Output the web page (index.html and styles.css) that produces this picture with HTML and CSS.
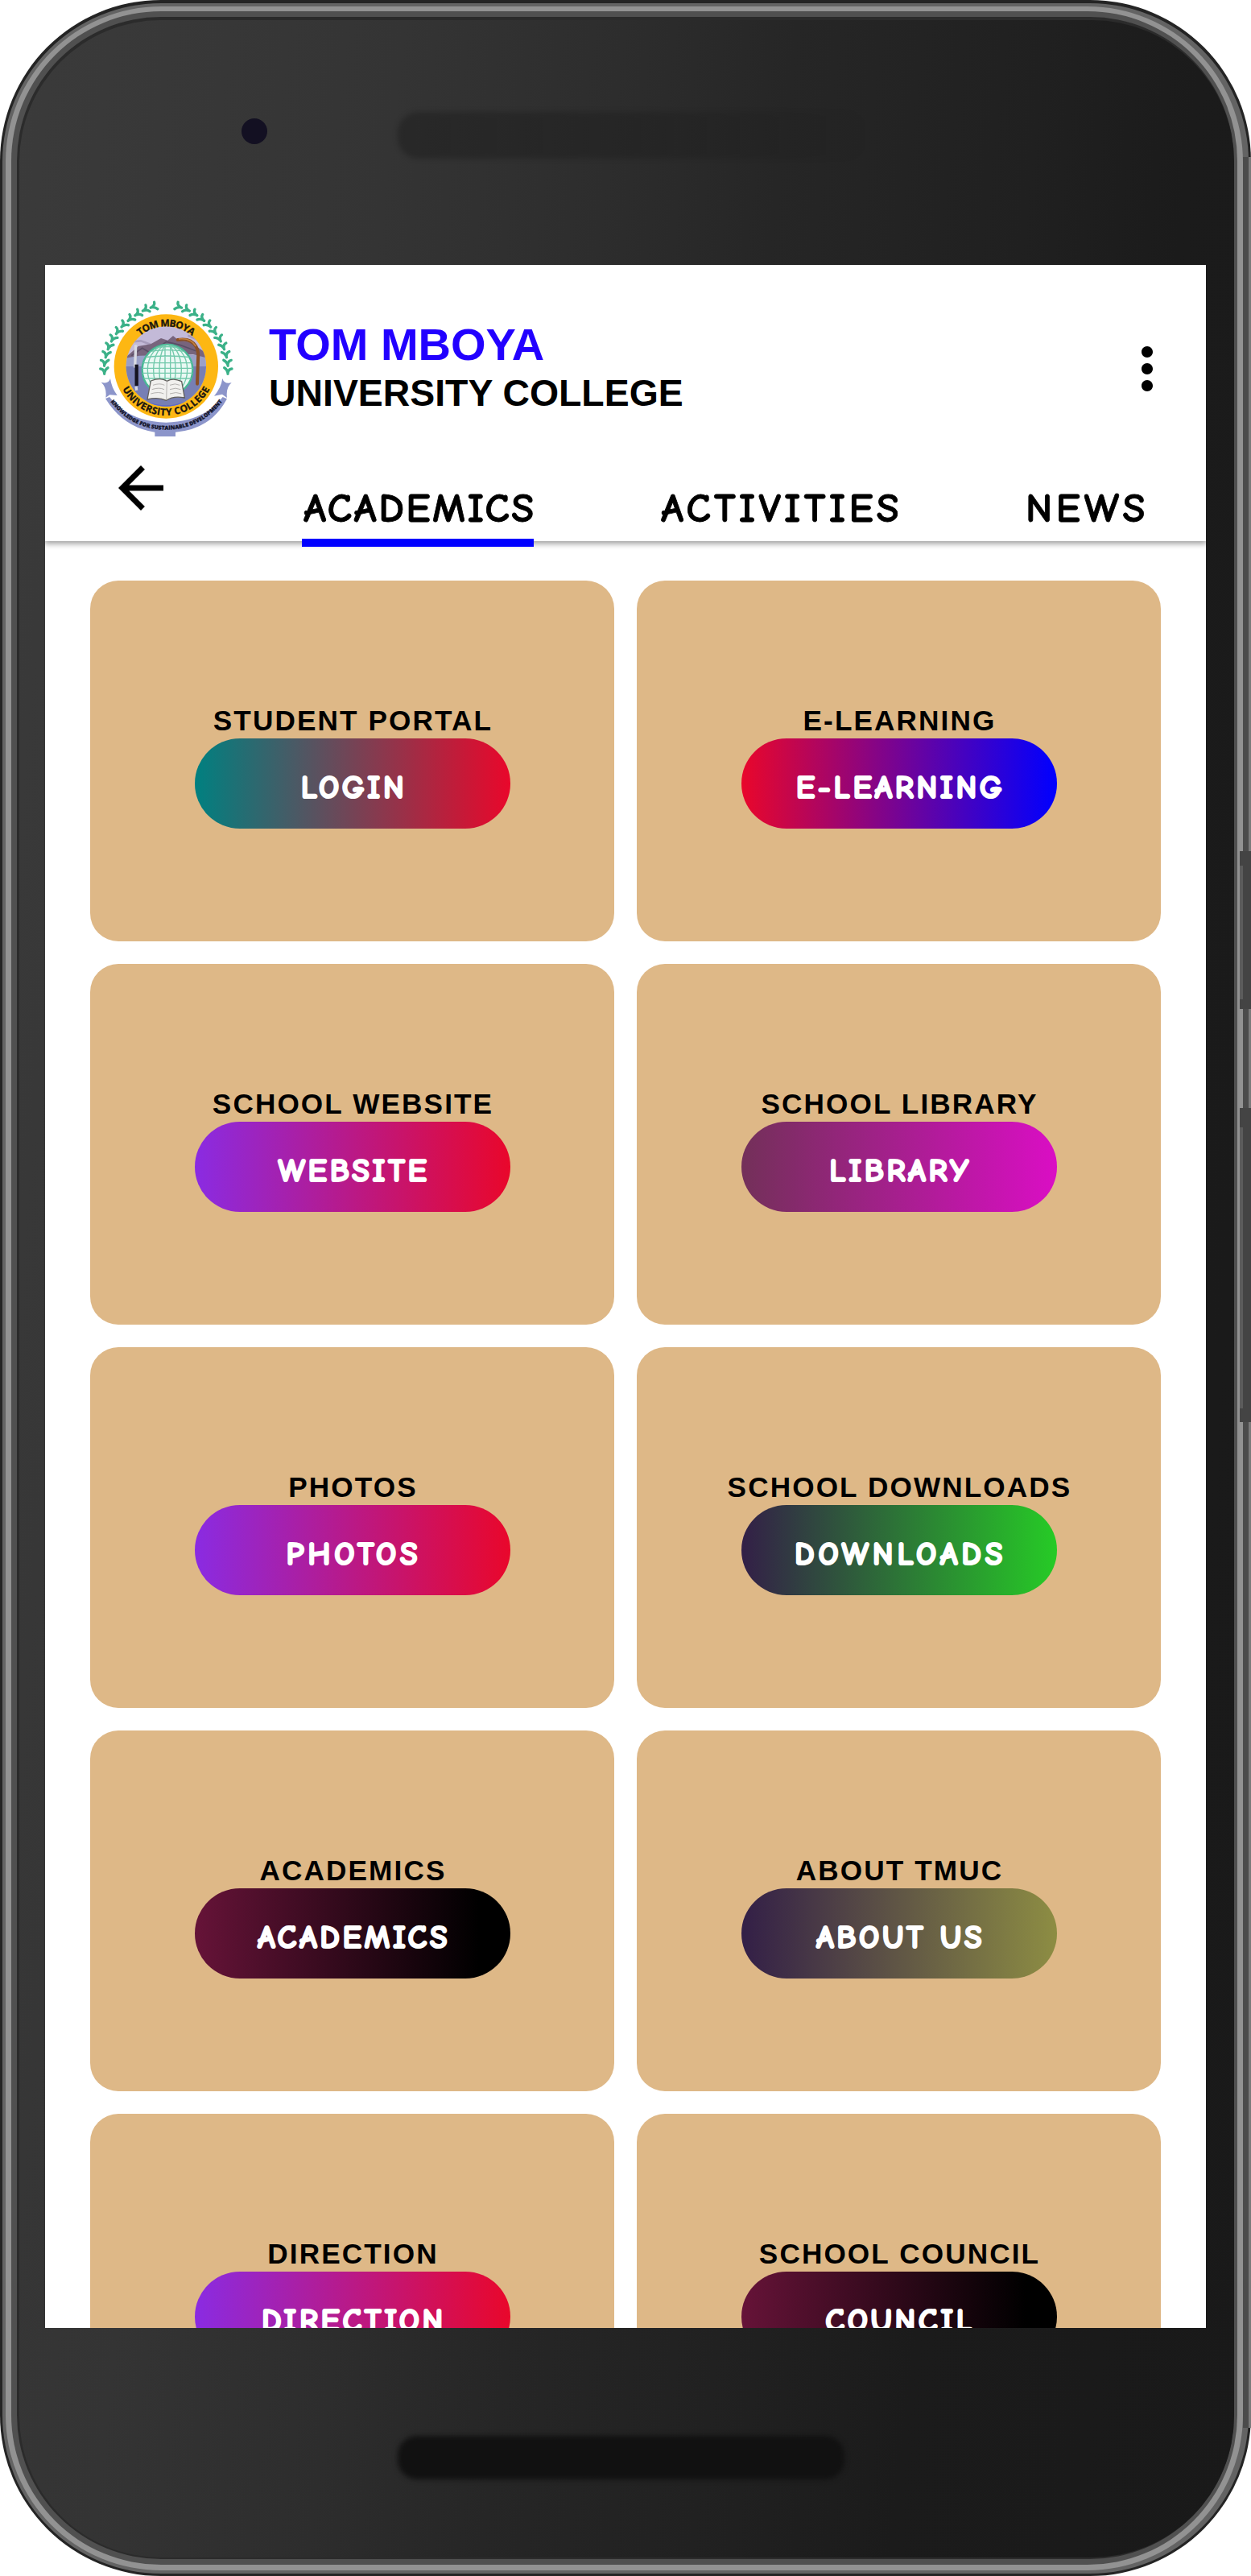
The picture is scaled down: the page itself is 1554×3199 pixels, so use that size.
FILE: index.html
```html
<!DOCTYPE html>
<html lang="en">
<head>
<meta charset="utf-8">
<title>Tom Mboya University College</title>
<link rel="stylesheet" href="styles.css">
</head>
<body>
<div class="phone">
  <svg class="frame" width="1554" height="3199" viewBox="0 0 1554 3199" aria-hidden="true">
    <defs>
      <linearGradient id="body" gradientUnits="userSpaceOnUse" x1="0" y1="0" x2="1920" y2="240">
        <stop offset="0" stop-color="#3b3b3b"/>
        <stop offset=".26" stop-color="#343434"/>
        <stop offset=".4" stop-color="#2d2d2d"/>
        <stop offset=".51" stop-color="#262626"/>
        <stop offset=".67" stop-color="#202020"/>
        <stop offset=".77" stop-color="#1b1b1b"/>
        <stop offset="1" stop-color="#191919"/>
      </linearGradient>
      <linearGradient id="grille" x1="0" x2="1" y1="0" y2="0">
        <stop offset="0" stop-color="#000" stop-opacity=".22"/>
        <stop offset=".5" stop-color="#000" stop-opacity=".14"/>
        <stop offset="1" stop-color="#000" stop-opacity="0"/>
      </linearGradient>
      <filter id="soft" x="-5%" y="-20%" width="110%" height="140%" color-interpolation-filters="sRGB"><feGaussianBlur stdDeviation="3"/></filter>
    </defs>
    <rect width="1554" height="3199" rx="200" fill="#242424"/>
    <rect x="3" y="4" width="1548" height="3192" rx="197" fill="#636363"/>
    <rect x="7" y="8" width="1537" height="3184" rx="193" fill="#929292"/>
    <rect x="14" y="14" width="1523" height="3171" rx="186" fill="#505050"/>
    <rect x="21" y="21" width="1512" height="3157" rx="179" fill="#2b2b2b"/>
    <rect x="24" y="25" width="1509" height="3151" rx="176" fill="url(#body)"/>
    <rect x="1544" y="195" width="7" height="2820" fill="#4b4b4b"/>
    <rect x="1551" y="195" width="3" height="2820" fill="#7a7a7a"/>
    <path d="M1540 1057h14v196h-14zM1540 1376h14v390h-14z" fill="#444"/>
    <path d="M1540 1075h4v166h-4zM1540 1400h4v349h-4z" fill="#5c5c5c"/>
    <ellipse cx="316" cy="163" rx="16" ry="16" fill="#131022"/>
    <rect x="494" y="139" width="585" height="58" rx="26" fill="url(#grille)" filter="url(#soft)"/>
    <rect x="494" y="3025" width="555" height="54" rx="24" fill="#111" filter="url(#soft)"/>
  </svg>

  <div class="screen">
    <header class="header">
      <div class="brand">
        <svg class="crest" viewBox="60 60 525 525" role="img" aria-label="Crest">
          <defs>
            <path id="arc-top" d="M170 315a149 149 0 0 1 298 0"/>
            <path id="arc-bottom" d="M136 315a183 183 0 0 0 366 0"/>
            <path id="arc-motto" d="M101 430Q180 550 319 551Q458 550 540 430"/>
            <clipPath id="disc"><circle cx="319" cy="315" r="149"/></clipPath>
            <clipPath id="globe"><circle cx="324" cy="328" r="94"/></clipPath>
            <g id="leaf"><path d="M-15-9Q-4-9 0 6Q3-8 13-13M0 4v6" fill="none" stroke="#3bb188" stroke-width="10" stroke-linecap="round"/></g>
            <g id="branch">
              <use href="#leaf" transform="translate(89 333)"/>
              <use href="#leaf" transform="translate(90 303) rotate(8)"/>
              <use href="#leaf" transform="translate(96 272) rotate(14)"/>
              <use href="#leaf" transform="translate(106 242) rotate(22)"/>
              <use href="#leaf" transform="translate(120 213) rotate(30)"/>
              <use href="#leaf" transform="translate(139 186) rotate(38)"/>
              <use href="#leaf" transform="translate(160 161) rotate(45)"/>
              <use href="#leaf" transform="translate(185 139) rotate(52)"/>
              <use href="#leaf" transform="translate(212 120) rotate(59)"/>
              <use href="#leaf" transform="translate(241 104) rotate(65)"/>
              <use href="#leaf" transform="translate(271 93) rotate(71)"/>
            </g>
          </defs>
          <use href="#branch"/>
          <use href="#branch" transform="matrix(-1 0 0 1 638 0)"/>
          <circle cx="319" cy="315" r="194" fill="#fdb713"/>
          <g clip-path="url(#disc)">
            <rect x="165" y="160" width="310" height="310" fill="#c3bad8"/>
            <rect x="165" y="272" width="310" height="50" fill="#9aa0c8"/>
            <rect x="165" y="315" width="310" height="155" fill="#777fb4"/>
            <path d="M165 225l60-5 40 15M400 200l75 30" stroke="#a79cbc" stroke-width="8" fill="none"/>
            <path d="M165 285L215 240L262 232L300 210L325 218L345 201L362 215L410 225L475 270V285L420 270L220 275Z" fill="#77647d"/>
            <path d="M190 275l40-28 30 18 60-42 50 12 60 22" stroke="#5a4d66" stroke-width="5" fill="none"/>
            <path d="M170 400q149 120 298 0v80H170z" fill="#5b68c6"/>
          </g>
          <circle cx="324" cy="328" r="94" fill="#eaf9f4" stroke="#48b895" stroke-width="7"/>
          <g clip-path="url(#globe)" fill="none" stroke="#72c9ab" stroke-width="4">
            <ellipse cx="324" cy="328" rx="74" ry="94"/><ellipse cx="324" cy="328" rx="52" ry="94"/><ellipse cx="324" cy="328" rx="30" ry="94"/><path d="M315 230v190M335 230v190M226 340h196M226 322h196M226 302h196M230 282q94-12 188 0M240 262q84-16 168 0M230 360h190M260 248q64-12 128 0"/>
          </g>
          <path d="M206 235l-3 85M207 390l2 14" stroke="#d9dbe3" stroke-width="10" fill="none"/>
          <path d="M209 308V387" stroke="#151420" stroke-width="13"/>
          <path d="M362 216Q410 208 430 240Q441 258 438 290L435 380" fill="none" stroke="#8a4f25" stroke-width="12" stroke-linecap="round"/>
          <path d="M366 213Q412 208 430 240" fill="none" stroke="#c3813e" stroke-width="5"/>
          <path d="M262 369Q300 354 322 370Q345 356 377 371L388 432Q345 424 320 442Q290 428 249 438Z" fill="#f1f0ee" stroke="#625f5c" stroke-width="4"/>
          <path d="M322 370L320 440M270 385q25-9 43 0M266 401q28-9 46 0M262 417q30-9 48 0M333 385q20-9 37 0M333 401q22-9 40 0M333 417q24-9 43 0" fill="none" stroke="#b5b3b1" stroke-width="3"/>
          <path d="M77 374Q105 382 111 360Q115 393 137 423L109 421L94 431Q99 394 77 374ZM563 376Q535 382 529 360Q524 395 498 425L528 419L546 432Q541 394 563 376Z" fill="#8c95ca"/>
          <path d="M108 429Q180 521 319 524Q458 521 530 429L546 436Q485 550 354 560V576H277V560Q160 543 93 435Z" fill="#8c95ca"/>
          <text class="crest-name"><textPath href="#arc-top" startOffset="50%" text-anchor="middle" textLength="210">TOM MBOYA</textPath></text>
          <text class="crest-name"><textPath href="#arc-bottom" startOffset="50%" text-anchor="middle" textLength="400">UNIVERSITY COLLEGE</textPath></text>
          <text class="crest-motto"><textPath href="#arc-motto" startOffset="50%" text-anchor="middle" textLength="485">KNOWLEDGE FOR SUSTAINABLE DEVELOPMENT</textPath></text>
        </svg>
        <div class="titles">
          <h1 class="name">TOM MBOYA</h1>
          <p class="subname">UNIVERSITY COLLEGE</p>
        </div>
        <svg class="icon more" viewBox="0 0 24 24" aria-label="More"><path d="M12 8c1.1 0 2-.9 2-2s-.9-2-2-2-2 .9-2 2 .9 2 2 2zm0 2c-1.1 0-2 .9-2 2s.9 2 2 2 2-.9 2-2-.9-2-2-2zm0 6c-1.1 0-2 .9-2 2s.9 2 2 2 2-.9 2-2-.9-2-2-2z"/></svg>
      </div>
      <nav class="tabs">
        <svg class="icon back" viewBox="0 0 24 24" aria-label="Back"><path d="M20 11H7.83l5.59-5.59L12 4l-8 8 8 8 1.41-1.41L7.83 13H20v-2z"/></svg>
        <span class="tab tab-academics active">ACADEMICS</span>
        <span class="tab tab-activities">ACTIVITIES</span>
        <span class="tab tab-news">NEWS</span>
      </nav>
    </header>

    <main class="grid">
      <section class="card"><h2 class="label">STUDENT PORTAL</h2><a class="pill teal-red">LOGIN</a></section>
      <section class="card"><h2 class="label">E-LEARNING</h2><a class="pill red-blue">E-LEARNING</a></section>
      <section class="card"><h2 class="label">SCHOOL WEBSITE</h2><a class="pill violet-red">WEBSITE</a></section>
      <section class="card"><h2 class="label">SCHOOL LIBRARY</h2><a class="pill plum-magenta">LIBRARY</a></section>
      <section class="card"><h2 class="label">PHOTOS</h2><a class="pill violet-red wide">PHOTOS</a></section>
      <section class="card"><h2 class="label">SCHOOL DOWNLOADS</h2><a class="pill navy-green wide">DOWNLOADS</a></section>
      <section class="card"><h2 class="label">ACADEMICS</h2><a class="pill wine-black">ACADEMICS</a></section>
      <section class="card"><h2 class="label">ABOUT TMUC</h2><a class="pill navy-olive">ABOUT US</a></section>
      <section class="card"><h2 class="label">DIRECTION</h2><a class="pill violet-red">DIRECTION</a></section>
      <section class="card"><h2 class="label">SCHOOL COUNCIL</h2><a class="pill wine-black">COUNCIL</a></section>
    </main>
  </div>
</div>
</body>
</html>
```
FILE: styles.css
```css
* { box-sizing: border-box; margin: 0; }

body {
  background: #fff;
  font-family: "Liberation Sans", Arial, sans-serif;
  color: #000;
}

.phone {
  position: relative;
  width: 1554px;
  height: 3199px;
  padding: 329px 56px 308px;
  overflow: hidden;
}

.frame { position: absolute; inset: 0; }

.screen {
  position: relative;
  height: 2562px;
  overflow: hidden;
  background: #fff;
}

.header {
  height: 343px;
  background: #fff;
  box-shadow: 0 2px 7px 1px rgba(0, 0, 0, .4);
}

.brand {
  display: flex;
  align-items: flex-start;
  height: 235px;
  padding: 41px 31px 0 64px;
}

.crest { width: 175px; height: 175px; }
.crest-name { font: 700 36px "Open Sans", sans-serif; fill: #1b1710; stroke: #1b1710; }
.crest-motto { font: 900 20px "Open Sans", sans-serif; fill: #14152c; stroke: #14152c; }

.titles { flex: 1; padding: 26px 0 0 39px; }
.name { font-size: 56px; line-height: 64px; font-weight: 700; color: #20f; }
.subname { font-size: 46.4px; line-height: 56px; font-weight: 700; }

.icon { width: 84px; height: 84px; }
.more { margin-top: 46px; }

.tabs {
  display: flex;
  align-items: flex-start;
  height: 108px;
  padding-left: 77px;
}

.tab {
  height: 115px;
  padding-top: 35px;
  font: 700 51px/66px "Comic Sans MS", "Comic Neue", Lato, sans-serif;
  white-space: nowrap;
  -webkit-text-stroke: .8px #000;
}
.tab-academics { width: 288px; margin-left: 158px; padding-left: 2px; letter-spacing: 2.4px; }
.tab-activities { width: 298px; margin-left: 156px; padding-left: 2px; letter-spacing: 4.1px; }
.tab-news { margin-left: 157px; letter-spacing: 4.6px; }
.active { border-bottom: 10.5px solid #00f; }

.grid {
  display: grid;
  grid-template-columns: 651px 651px;
  grid-auto-rows: 448px;
  gap: 28px;
  padding: 49px 56px 0;
}

.card {
  display: flex;
  flex-direction: column;
  align-items: center;
  padding-top: 154px;
  border-radius: 35px;
  background: #deb887;
}

.label {
  height: 42px;
  font-size: 35.2px;
  line-height: 40px;
  font-weight: 700;
  letter-spacing: 2.1px;
  text-indent: 2px;
  white-space: nowrap;
}

.pill {
  width: 392px;
  height: 112px;
  border-radius: 56px;
  color: #fff;
  font: 900 39.5px/122px "Comic Sans MS", "Comic Neue", Lato, sans-serif;
  letter-spacing: 3.6px;
  text-indent: 4px;
  text-align: center;
  white-space: nowrap;
  -webkit-text-stroke: 2.2px #fff;
}
.wide { letter-spacing: 4.8px; }

.teal-red { background: linear-gradient(90deg, #008080, #e9072b); }
.red-blue { background: linear-gradient(90deg, #e9072b, #00f); }
.violet-red { background: linear-gradient(90deg, #8a2be2, #e9072b); }
.plum-magenta { background: linear-gradient(90deg, #733059, #da0ec4); }
.navy-green { background: linear-gradient(90deg, #331f47, #26cb26); }
.wine-black { background: linear-gradient(90deg, #661338, #000 90%); }
.navy-olive { background: linear-gradient(90deg, #331f47, #8d8d43); }
```
